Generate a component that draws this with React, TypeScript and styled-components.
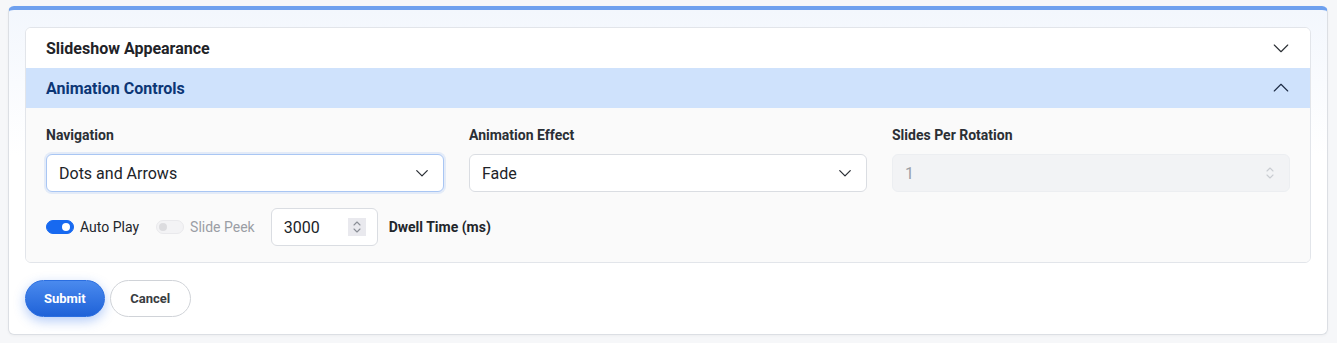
import React, { useState } from 'react';
import styled, { createGlobalStyle } from 'styled-components';

// ========== Style start ==========================

const GlobalStyle = createGlobalStyle`
  * { box-sizing: border-box; }
  body {
    margin: 0;
    background: #f6f7f9;
    font-family: Roboto, "Liberation Sans", Arial, sans-serif;
    color: #1f2328;
  }
`;

const Page = styled.div`
  padding: 6px 9px 8px 8px;
`;

const Card = styled.div`
  border: 1px solid #dcdfe4;
  border-top: 4px solid #6ea0ee;
  border-radius: 6px;
  background: linear-gradient(180deg, #f3f7fd 0%, #ffffff 45%, #ffffff 100%);
  padding: 17px 16px 17px 16px;
  box-shadow: 0 1px 3px rgba(0, 0, 0, 0.04);
`;

const Accordion = styled.div`
  border: 1px solid #e2e5ea;
  border-radius: 6px;
  overflow: hidden;
  background: #fff;
`;

const Header = styled.div<{ $open?: boolean }>`
  height: 40px;
  display: flex;
  align-items: center;
  justify-content: space-between;
  padding: 0 20px 0 20px;
  font-size: 16px;
  font-weight: 700;
  background: ${(p) => (p.$open ? '#cfe2fc' : '#ffffff')};
  color: ${(p) => (p.$open ? '#0c3675' : '#1f2328')};
  cursor: pointer;
`;

const Body = styled.div`
  background: #fafafa;
  padding: 19px 20px 16px 20px;
`;

const Grid = styled.div`
  display: grid;
  grid-template-columns: repeat(3, 1fr);
  gap: 25px;
`;

const Field = styled.div`
  display: flex;
  flex-direction: column;
`;

const Label = styled.label`
  font-size: 14px;
  font-weight: 700;
  color: #2b2f35;
  margin-bottom: 10px;
  line-height: 17px;
`;

const SelectBox = styled.div<{ $focus?: boolean; $disabled?: boolean }>`
  height: 38px;
  display: flex;
  align-items: center;
  justify-content: space-between;
  padding: 0 14px 0 12px;
  border-radius: 6px;
  font-size: 16px;
  border: 1px solid ${(p) => (p.$focus ? '#a9c6f3' : p.$disabled ? '#eceef1' : '#dadde2')};
  box-shadow: ${(p) => (p.$focus ? '0 0 0 2px rgba(120, 165, 240, 0.18)' : 'none')};
  background: ${(p) => (p.$disabled ? '#f2f3f5' : '#ffffff')};
  color: ${(p) => (p.$disabled ? '#9a9ea5' : '#202328')};
`;

const Row = styled.div`
  display: flex;
  align-items: center;
  margin-top: 16px;
`;

const ToggleWrap = styled.label<{ $disabled?: boolean }>`
  display: flex;
  align-items: center;
  gap: 6px;
  font-size: 14px;
  color: ${(p) => (p.$disabled ? '#9a9ea5' : '#23262b')};
  margin-right: 16px;

  & + & {
    margin-left: 1px;
  }
`;

const Track = styled.span<{ $on?: boolean }>`
  width: 28px;
  height: 14px;
  border-radius: 7px;
  position: relative;
  background: ${(p) => (p.$on ? '#1769f0' : '#f3f3f5')};
  border: 1px solid ${(p) => (p.$on ? '#1769f0' : '#e9e9ec')};

  &::after {
    content: '';
    position: absolute;
    top: 2px;
    left: ${(p) => (p.$on ? '15px' : '2px')};
    width: 8px;
    height: 8px;
    border-radius: 50%;
    background: ${(p) => (p.$on ? '#ffffff' : '#dcdcdf')};
  }
`;

const NumberBox = styled.div`
  width: 107px;
  height: 38px;
  border: 1px solid #dadde2;
  border-radius: 6px;
  background: #fff;
  display: flex;
  align-items: center;
  justify-content: space-between;
  padding: 0 11px 0 12px;
  font-size: 16px;
  color: #202328;
`;

const Spinner = styled.span`
  width: 18px;
  height: 18px;
  background: #e9e9ee;
  display: flex;
  align-items: center;
  justify-content: center;
`;

const Aside = styled.span`
  font-size: 14px;
  font-weight: 700;
  color: #22262b;
  margin-left: 11px;
`;

const Actions = styled.div`
  display: flex;
  gap: 5px;
  margin-top: 17px;
`;

const Button = styled.button<{ $primary?: boolean }>`
  height: 37px;
  padding: 0 ${(p) => (p.$primary ? '18px' : '19.5px')};
  border-radius: 19px;
  font-family: inherit;
  font-size: 13px;
  font-weight: 700;
  cursor: pointer;
  border: 1px solid ${(p) => (p.$primary ? '#2b6ee0' : '#d0d3d8')};
  color: ${(p) => (p.$primary ? '#ffffff' : '#3a3d42')};
  background: ${(p) =>
    p.$primary ? 'linear-gradient(180deg, #4a8aee 0%, #1f62d8 100%)' : '#ffffff'};
  box-shadow: ${(p) => (p.$primary ? '0 4px 12px rgba(40, 110, 235, 0.35)' : 'none')};
`;

// ========== Style end ==========================

const Chevron: React.FC<{ up?: boolean; size?: number; color?: string; width?: number }> = ({
  up,
  size = 18,
  color = '#2b2f35',
  width = 1.5,
}) => (
  <svg width={size} height={size} viewBox="0 0 24 24" fill="none" stroke={color} strokeWidth={width} strokeLinecap="round" strokeLinejoin="round">
    {up ? <polyline points="3 16 12 7 21 16" /> : <polyline points="3 8 12 17 21 8" />}
  </svg>
);

const UpDown: React.FC<{ color: string }> = ({ color }) => (
  <svg width="10" height="14" viewBox="0 0 10 14" fill="none" stroke={color} strokeWidth="1.1" strokeLinecap="round" strokeLinejoin="round">
    <polyline points="2 5 5 2 8 5" />
    <polyline points="2 9 5 12 8 9" />
  </svg>
);

const App: React.FC = () => {
  const [autoPlay, setAutoPlay] = useState(true);

  return (
    <Page>
      <GlobalStyle />
      <Card>
        <Accordion>
          <Header>
            <span>Slideshow Appearance</span>
            <Chevron />
          </Header>
          <Header $open>
            <span>Animation Controls</span>
            <Chevron up color="#1d2b44" />
          </Header>
          <Body>
            <Grid>
              <Field>
                <Label>Navigation</Label>
                <SelectBox $focus>
                  <span>Dots and Arrows</span>
                  <Chevron size={14} width={2.2} color="#2b2f35" />
                </SelectBox>
              </Field>
              <Field>
                <Label>Animation Effect</Label>
                <SelectBox>
                  <span>Fade</span>
                  <Chevron size={14} width={2.2} color="#2b2f35" />
                </SelectBox>
              </Field>
              <Field>
                <Label>Slides Per Rotation</Label>
                <SelectBox $disabled>
                  <span>1</span>
                  <UpDown color="#c9ccd1" />
                </SelectBox>
              </Field>
            </Grid>
            <Row>
              <ToggleWrap onClick={() => setAutoPlay(!autoPlay)}>
                <Track $on={autoPlay} />
                Auto Play
              </ToggleWrap>
              <ToggleWrap $disabled>
                <Track />
                Slide Peek
              </ToggleWrap>
              <NumberBox>
                <span>3000</span>
                <Spinner>
                  <UpDown color="#8a8e96" />
                </Spinner>
              </NumberBox>
              <Aside>Dwell Time (ms)</Aside>
            </Row>
          </Body>
        </Accordion>
        <Actions>
          <Button $primary>Submit</Button>
          <Button>Cancel</Button>
        </Actions>
      </Card>
    </Page>
  );
};

export default App;
